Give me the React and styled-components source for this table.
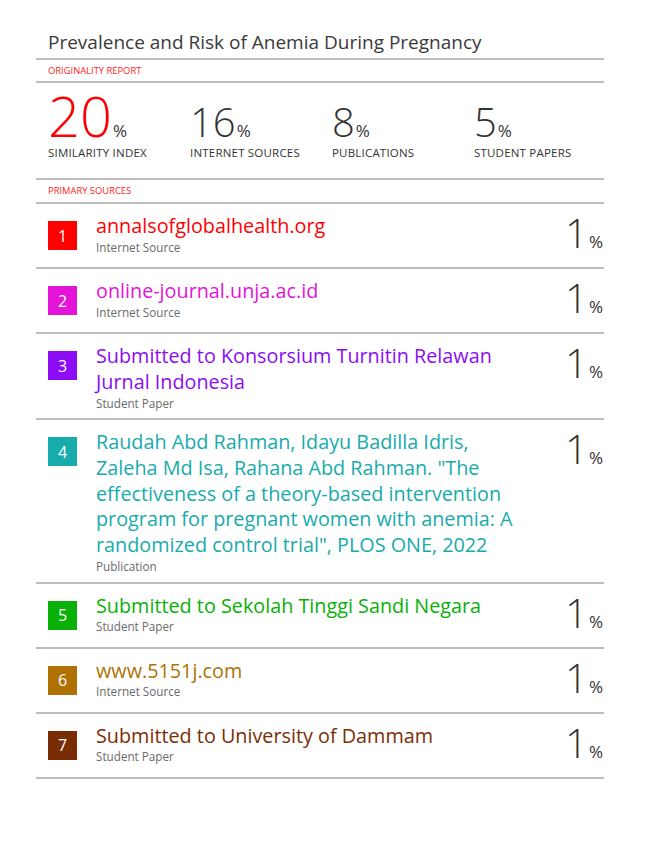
import React from 'react';
import styled, { createGlobalStyle } from 'styled-components';

const GlobalStyle = createGlobalStyle`
  body {
    margin: 0;
    background: #fff;
    font-family: 'Open Sans', 'Liberation Sans', sans-serif;
  }
`;

const Page = styled.div`
  width: 568px;
  margin-left: 36px;
  padding-top: 30px;
  color: #333;
`;

const Title = styled.div`
  height: 28px;
  padding-left: 12px;
  font-size: 19px;
  line-height: 24px;
  color: #3a3a3a;
  border-bottom: 2px solid #bdbdbd;
`;

const SectionLabel = styled.div`
  height: ${(p) => p.$h}px;
  padding-left: 12px;
  font-size: 9.4px;
  line-height: ${(p) => p.$h}px;
  color: #ff1a1a;
  text-transform: uppercase;
  border-bottom: 2px solid #bdbdbd;
`;

const Stats = styled.div`
  display: grid;
  grid-template-columns: repeat(4, 142px);
  height: 97px;
  box-sizing: border-box;
  padding: 16.5px 0 0 12px;
  border-bottom: 2px solid #bdbdbd;
`;

const Stat = styled.div`
  display: flex;
  flex-direction: column;
`;

const StatValue = styled.div`
  font-size: 40px;
  line-height: 44px;
  white-space: nowrap;
`;

const Num = styled.span`
  font-size: ${(p) => p.$size}px;
  line-height: 0;
  font-weight: 300;
  color: ${(p) => p.$color};
`;

const Pct = styled.span`
  font-size: 17px;
  line-height: 0;
  font-weight: 400;
  color: #333;
  margin-left: 1px;
`;

const StatLabel = styled.div`
  margin-top: 2px;
  font-size: 11.5px;
  line-height: 14px;
  letter-spacing: 0.2px;
  text-transform: uppercase;
  color: #333;
`;

const Row = styled.div`
  display: flex;
  align-items: flex-start;
  min-height: 45.5px;
  padding: 9px 1px 8.5px 12px;
  border-bottom: 2px solid #bdbdbd;
`;

const Badge = styled.div`
  flex: 0 0 29px;
  height: 29px;
  margin-top: 8px;
  margin-right: 19px;
  display: flex;
  align-items: center;
  justify-content: center;
  background: ${(p) => p.$color};
  color: #fff;
  font-size: 16px;
  font-weight: 400;
`;

const Source = styled.div`
  width: 428px;
`;

const SourceName = styled.div`
  font-size: 19.8px;
  line-height: 25.8px;
  color: ${(p) => p.$color};
`;

const SourceType = styled.div`
  font-size: 11.7px;
  line-height: 14px;
  color: #6a6a6a;
  margin-top: 1px;
`;

const Share = styled.div`
  margin-left: auto;
  font-size: 40px;
  line-height: 40px;
  font-weight: 300;
  color: #333;
  white-space: nowrap;
`;

const STATS = [
  { value: 20, label: 'Similarity Index', color: '#ff0000', size: 56 },
  { value: 16, label: 'Internet Sources', color: '#333', size: 40 },
  { value: 8, label: 'Publications', color: '#333', size: 40 },
  { value: 5, label: 'Student Papers', color: '#333', size: 40 },
];

const SOURCES = [
  { name: 'annalsofglobalhealth.org', type: 'Internet Source', color: '#ff0000' },
  { name: 'online-journal.unja.ac.id', type: 'Internet Source', color: '#e314d8' },
  { name: 'Submitted to Konsorsium Turnitin Relawan Jurnal Indonesia', type: 'Student Paper', color: '#8c0cf5' },
  {
    name: 'Raudah Abd Rahman, Idayu Badilla Idris, Zaleha Md Isa, Rahana Abd Rahman. "The effectiveness of a theory-based intervention program for pregnant women with anemia: A randomized control trial", PLOS ONE, 2022',
    type: 'Publication',
    color: '#17abab',
  },
  { name: 'Submitted to Sekolah Tinggi Sandi Negara', type: 'Student Paper', color: '#08b008' },
  { name: 'www.5151j.com', type: 'Internet Source', color: '#b07104' },
  { name: 'Submitted to University of Dammam', type: 'Student Paper', color: '#7a2d04' },
];

const App = () => (
  <>
    <GlobalStyle />
    <Page>
      <Title>Prevalence and Risk of Anemia During Pregnancy</Title>
      <SectionLabel $h={21}>Originality Report</SectionLabel>
      <Stats>
        {STATS.map((s) => (
          <Stat key={s.label}>
            <StatValue>
              <Num $size={s.size} $color={s.color}>{s.value}</Num>
              <Pct>%</Pct>
            </StatValue>
            <StatLabel>{s.label}</StatLabel>
          </Stat>
        ))}
      </Stats>
      <SectionLabel $h={22}>Primary Sources</SectionLabel>
      {SOURCES.map((src, i) => (
        <Row key={i}>
          <Badge $color={src.color}>{i + 1}</Badge>
          <Source>
            <SourceName $color={src.color}>{src.name}</SourceName>
            <SourceType>{src.type}</SourceType>
          </Source>
          <Share>
            1<Pct>%</Pct>
          </Share>
        </Row>
      ))}
    </Page>
  </>
);

export default App;
